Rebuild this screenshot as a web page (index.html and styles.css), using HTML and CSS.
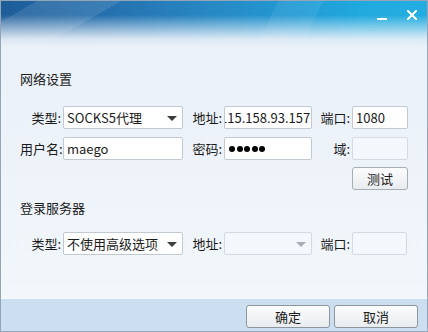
FILE: index.html
```html
<!DOCTYPE html>
<html lang="zh-CN">
<head>
<meta charset="utf-8">
<title>网络设置</title>
<link rel="stylesheet" href="styles.css">
</head>
<body>
<div class="window">
  <div class="titlebar">
    <div class="controls">
      <span class="ctl ctl-min" title="最小化"><svg width="10" height="10" viewBox="0 0 10 10"><rect x="0" y="7" width="10" height="2" fill="#fff"/></svg></span>
      <span class="ctl ctl-close" title="关闭"><svg width="10" height="10" viewBox="0 0 10 10"><path d="M1 1 L9 9 M9 1 L1 9" stroke="#fff" stroke-width="2" stroke-linecap="square"/></svg></span>
    </div>
  </div>
  <div class="content">
    <div class="section-title sec1">网络设置</div>
    <div class="form-grid">
      <div class="lbl">类型:</div>
      <div class="field select"><span class="val">SOCKS5代理</span><span class="arrow"></span></div>
      <div class="lbl">地址:</div>
      <div class="field clip"><span class="val scrolled">115.158.93.157</span></div>
      <div class="lbl">端口:</div>
      <div class="field"><span class="val">1080</span></div>

      <div class="lbl">用户名:</div>
      <div class="field"><span class="val">maego</span></div>
      <div class="lbl">密码:</div>
      <div class="field"><span class="dots"><i></i><i></i><i></i><i></i><i></i></span></div>
      <div class="lbl">域:</div>
      <div class="field disabled"></div>

      <div class="btn-cell"><div class="btn small">测试</div></div>
    </div>
    <div class="section-title sec2">登录服务器</div>
    <div class="form-grid">
      <div class="lbl">类型:</div>
      <div class="field select"><span class="val">不使用高级选项</span><span class="arrow"></span></div>
      <div class="lbl">地址:</div>
      <div class="field select disabled"><span class="val"></span><span class="arrow grey"></span></div>
      <div class="lbl">端口:</div>
      <div class="field disabled short"></div>
    </div>
  </div>
  <div class="footer">
    <div class="btn">确定</div>
    <div class="btn">取消</div>
  </div>
</div>
</body>
</html>
```

FILE: styles.css
```css
html, body {
  margin: 0;
  padding: 0;
}
body {
  width: 428px;
  height: 332px;
  overflow: hidden;
  font-family: "Noto Sans CJK SC", "Noto Sans", sans-serif;
  font-size: 13px;
  color: #1b1b1b;
}
.window {
  box-sizing: border-box;
  width: 428px;
  height: 332px;
  border: 1px solid #93a6b8;
  display: flex;
  flex-direction: column;
  background: linear-gradient(to bottom, #e9f0f8 0%, #edf3f9 50%, #f4f8fc 100%);
}
.titlebar {
  height: 45px;
  flex: none;
  display: flex;
  justify-content: flex-end;
  align-items: flex-start;
  background:
    linear-gradient(to bottom, rgba(233,240,248,0) 0px, rgba(233,240,248,0) 14px, rgba(233,240,248,0.55) 28px, rgba(233,240,248,0.92) 38px, #e9f0f8 45px),
    linear-gradient(150deg, rgba(255,255,255,0) 0px, rgba(255,255,255,0) 18px, rgba(255,255,255,0.10) 18px, rgba(255,255,255,0.10) 60px, rgba(255,255,255,0) 60px),
    linear-gradient(115deg, rgba(255,255,255,0) 62%, rgba(255,255,255,0.07) 62%, rgba(255,255,255,0.07) 72%, rgba(255,255,255,0) 72%),
    linear-gradient(to right, #1d5d99 0%, #2570ae 25%, #2789c4 50%, #2299d3 68%, #20aade 85%, #23ade0 100%);
}
.controls {
  display: flex;
  align-items: flex-start;
  gap: 20px;
  padding: 9px 10px 0 0;
}
.ctl {
  display: block;
  width: 10px;
  height: 10px;
}
.ctl svg { display: block; }
.ctl-min { margin-top: 1px; }
.ctl-close { margin-top: 0; }
.content {
  flex: 1;
  padding-left: 19px;
}
.section-title {
  line-height: 18px;
  height: 18px;
}
.sec1 { margin-top: 24px; }
.sec2 { margin-top: 8px; }
.form-grid {
  display: grid;
  grid-template-columns: 43px 120px 41px 88px 40px 56px;
  grid-auto-rows: 23px;
  row-gap: 8px;
  margin-top: 18px;
}
.sec2 + .form-grid { margin-top: 15px; }
.lbl {
  text-align: right;
  padding-right: 2px;
  line-height: 23px;
  white-space: nowrap;
}
.field {
  box-sizing: border-box;
  height: 23px;
  border: 1px solid #c2c9d1;
  border-radius: 2px;
  background: #fff;
  display: flex;
  align-items: center;
  padding-left: 3px;
  overflow: hidden;
  position: relative;
  white-space: nowrap;
}
.field .val {
  line-height: 21px;
}
.field.clip { padding-left: 0; }
.val.scrolled { margin-left: -5px; }
.field.disabled {
  background: #f4f7fb;
  border-color: #d3dae2;
}
.field.short { width: 55px; }
.select .val { flex: 1; }
.arrow {
  width: 0;
  height: 0;
  border-left: 5px solid transparent;
  border-right: 5px solid transparent;
  border-top: 5px solid #3c3c3c;
  margin-right: 5px;
  margin-top: 1px;
}
.arrow.grey { border-top-color: #a9aeb4; }
.dots {
  display: flex;
  gap: 1.5px;
  padding-left: 1px;
}
.dots i {
  display: block;
  width: 6px;
  height: 6px;
  border-radius: 50%;
  background: #000;
}
.btn-cell {
  grid-column: 6;
  margin-top: -1px;
}
.btn {
  box-sizing: border-box;
  height: 23px;
  width: 84px;
  border: 1px solid #8d959d;
  border-radius: 3px;
  background: linear-gradient(to bottom, #fcfcfd 0%, #f2f4f6 50%, #e9ecef 100%);
  text-align: center;
  line-height: 21px;
}
.btn.small {
  width: 56px;
  border-color: #a6aeb6;
}
.footer {
  flex: none;
  height: 33px;
  box-sizing: border-box;
  border-top: 1px solid #f7fafd;
  background: #cbdff0;
  display: flex;
  justify-content: flex-end;
  gap: 4px;
  padding: 6px 9px 0 0;
}
```
